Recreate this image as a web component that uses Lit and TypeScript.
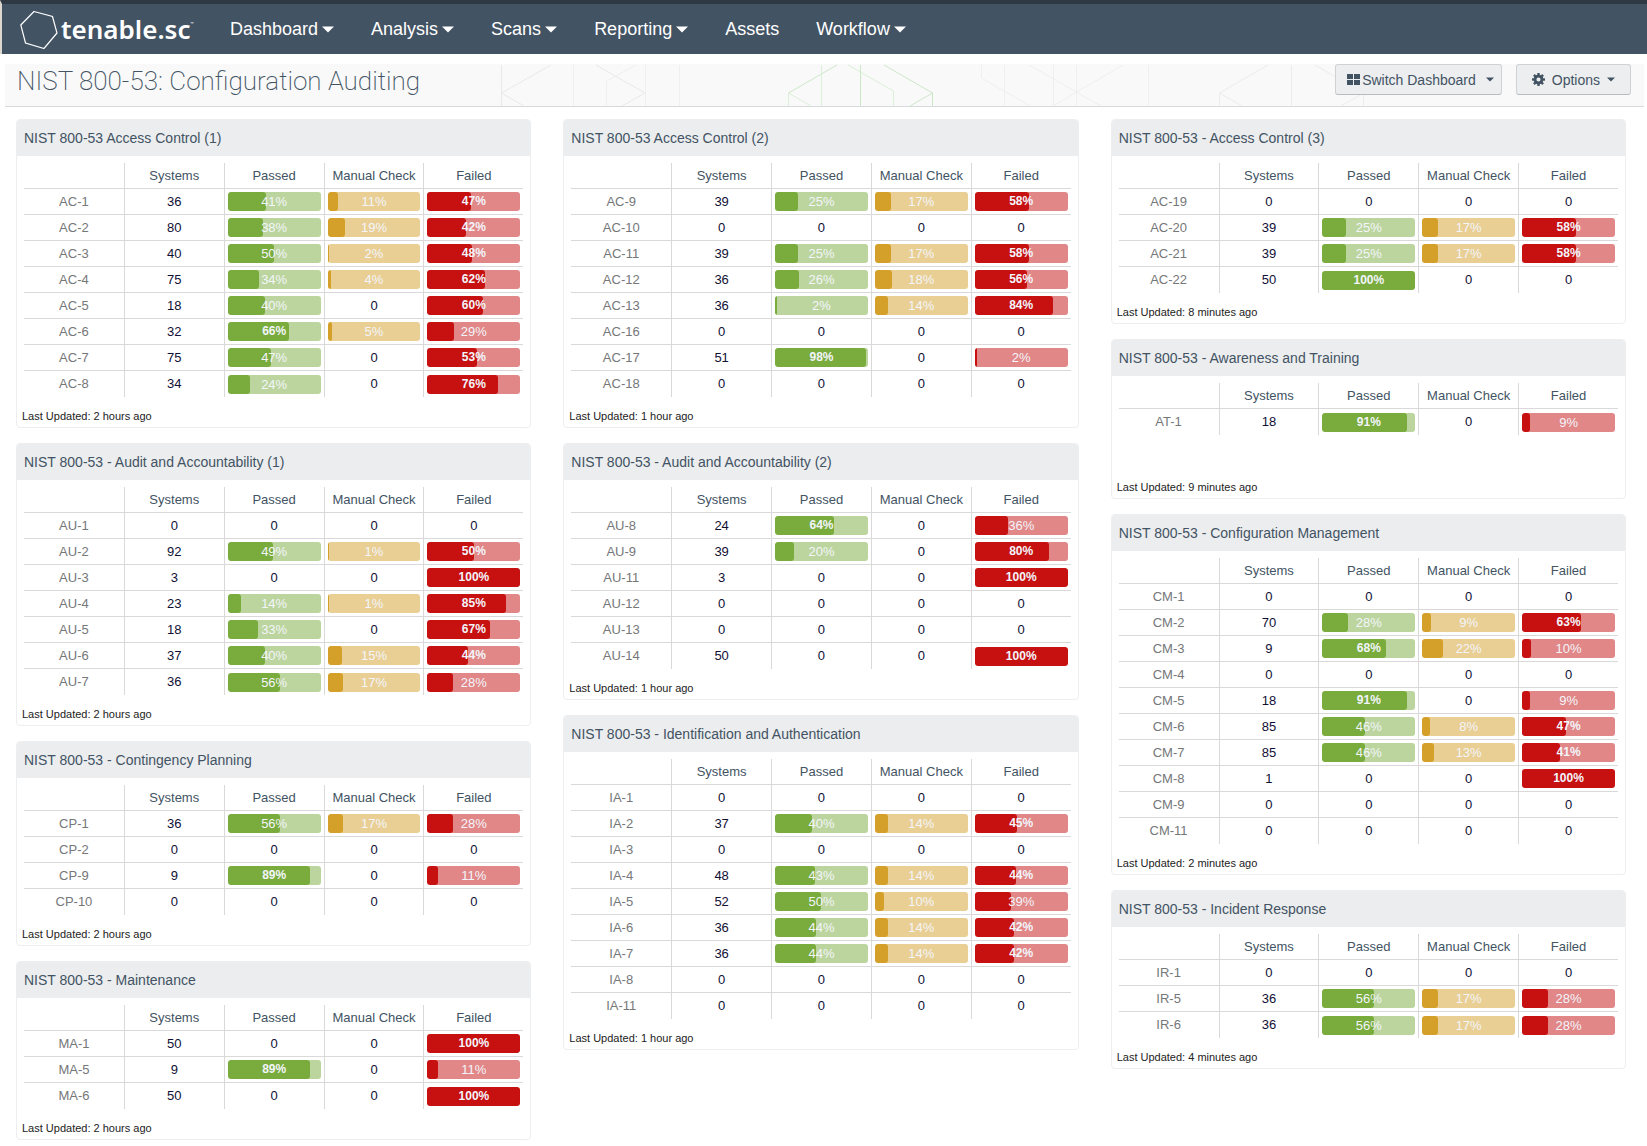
import { LitElement, html, svg, css } from "lit";
import { customElement, property } from "lit/decorators.js";

type Row = [string, number, number, number, number];
interface Panel {
  title: string;
  updated: string;
  rows: Row[];
}

const COLUMNS: Panel[][] = [
  [
    {
      title: "NIST 800-53 Access Control (1)",
      updated: "2 hours ago",
      rows: [
        ["AC-1", 36, 41, 11, 47],
        ["AC-2", 80, 38, 19, 42],
        ["AC-3", 40, 50, 2, 48],
        ["AC-4", 75, 34, 4, 62],
        ["AC-5", 18, 40, 0, 60],
        ["AC-6", 32, 66, 5, 29],
        ["AC-7", 75, 47, 0, 53],
        ["AC-8", 34, 24, 0, 76],
      ],
    },
    {
      title: "NIST 800-53 - Audit and Accountability (1)",
      updated: "2 hours ago",
      rows: [
        ["AU-1", 0, 0, 0, 0],
        ["AU-2", 92, 49, 1, 50],
        ["AU-3", 3, 0, 0, 100],
        ["AU-4", 23, 14, 1, 85],
        ["AU-5", 18, 33, 0, 67],
        ["AU-6", 37, 40, 15, 44],
        ["AU-7", 36, 56, 17, 28],
      ],
    },
    {
      title: "NIST 800-53 - Contingency Planning",
      updated: "2 hours ago",
      rows: [
        ["CP-1", 36, 56, 17, 28],
        ["CP-2", 0, 0, 0, 0],
        ["CP-9", 9, 89, 0, 11],
        ["CP-10", 0, 0, 0, 0],
      ],
    },
    {
      title: "NIST 800-53 - Maintenance",
      updated: "2 hours ago",
      rows: [
        ["MA-1", 50, 0, 0, 100],
        ["MA-5", 9, 89, 0, 11],
        ["MA-6", 50, 0, 0, 100],
      ],
    },
  ],
  [
    {
      title: "NIST 800-53 Access Control (2)",
      updated: "1 hour ago",
      rows: [
        ["AC-9", 39, 25, 17, 58],
        ["AC-10", 0, 0, 0, 0],
        ["AC-11", 39, 25, 17, 58],
        ["AC-12", 36, 26, 18, 56],
        ["AC-13", 36, 2, 14, 84],
        ["AC-16", 0, 0, 0, 0],
        ["AC-17", 51, 98, 0, 2],
        ["AC-18", 0, 0, 0, 0],
      ],
    },
    {
      title: "NIST 800-53 - Audit and Accountability (2)",
      updated: "1 hour ago",
      rows: [
        ["AU-8", 24, 64, 0, 36],
        ["AU-9", 39, 20, 0, 80],
        ["AU-11", 3, 0, 0, 100],
        ["AU-12", 0, 0, 0, 0],
        ["AU-13", 0, 0, 0, 0],
        ["AU-14", 50, 0, 0, 100],
      ],
    },
    {
      title: "NIST 800-53 - Identification and Authentication",
      updated: "1 hour ago",
      rows: [
        ["IA-1", 0, 0, 0, 0],
        ["IA-2", 37, 40, 14, 45],
        ["IA-3", 0, 0, 0, 0],
        ["IA-4", 48, 43, 14, 44],
        ["IA-5", 52, 50, 10, 39],
        ["IA-6", 36, 44, 14, 42],
        ["IA-7", 36, 44, 14, 42],
        ["IA-8", 0, 0, 0, 0],
        ["IA-11", 0, 0, 0, 0],
      ],
    },
  ],
  [
    {
      title: "NIST 800-53 - Access Control (3)",
      updated: "8 minutes ago",
      rows: [
        ["AC-19", 0, 0, 0, 0],
        ["AC-20", 39, 25, 17, 58],
        ["AC-21", 39, 25, 17, 58],
        ["AC-22", 50, 100, 0, 0],
      ],
    },
    {
      title: "NIST 800-53 - Awareness and Training",
      updated: "9 minutes ago",
      rows: [["AT-1", 18, 91, 0, 9]],
    },
    {
      title: "NIST 800-53 - Configuration Management",
      updated: "2 minutes ago",
      rows: [
        ["CM-1", 0, 0, 0, 0],
        ["CM-2", 70, 28, 9, 63],
        ["CM-3", 9, 68, 22, 10],
        ["CM-4", 0, 0, 0, 0],
        ["CM-5", 18, 91, 0, 9],
        ["CM-6", 85, 46, 8, 47],
        ["CM-7", 85, 46, 13, 41],
        ["CM-8", 1, 0, 0, 100],
        ["CM-9", 0, 0, 0, 0],
        ["CM-11", 0, 0, 0, 0],
      ],
    },
    {
      title: "NIST 800-53 - Incident Response",
      updated: "4 minutes ago",
      rows: [
        ["IR-1", 0, 0, 0, 0],
        ["IR-5", 36, 56, 17, 28],
        ["IR-6", 36, 56, 17, 28],
      ],
    },
  ],
];

@customElement("matrix-panel")
export class MatrixPanel extends LitElement {
  @property({ attribute: false }) panel!: Panel;

  static styles = css`
    :host {
      display: block;
    }
    .card {
      box-sizing: border-box;
      display: flex;
      flex-direction: column;
      min-height: 160px;
      border: 1px solid #edeeef;
      border-radius: 4px;
      background: #fff;
      overflow: hidden;
    }
    .title {
      margin: 0;
      padding: 0 7px;
      background: #ecedef;
      color: #425363;
      font-size: 14px;
      font-weight: 400;
      line-height: 36px;
    }
    .body {
      flex: 1;
      padding: 7px 7px 0;
    }
    table {
      width: 100%;
      table-layout: fixed;
      border-collapse: separate;
      border-spacing: 0;
    }
    th,
    td {
      box-sizing: border-box;
      height: 26px;
      padding: 0;
      border-left: 1px solid #d9d9d9;
      border-bottom: 1px solid #d9d9d9;
      text-align: center;
      font-size: 13px;
      font-weight: 400;
      line-height: 18px;
      color: #101035;
    }
    thead th {
      color: #425363;
      white-space: nowrap;
    }
    tbody th {
      color: #757779;
    }
    tr > :first-child {
      border-left: 0;
    }
    tbody tr:last-child > * {
      border-bottom: 0;
    }
    td.filled {
      padding: 0 3px;
    }
    .bar {
      display: grid;
      height: 19px;
      border-radius: 3px;
      overflow: hidden;
      color: #f3f5fb;
      line-height: 19px;
    }
    .bar > * {
      grid-area: 1 / 1;
    }
    .fill {
      border-radius: 3px;
    }
    .passed {
      background: #bcd59e;
    }
    .passed .fill {
      background: #79ac3d;
    }
    .manual {
      background: #e9cf94;
    }
    .manual .fill {
      background: #d5a029;
    }
    .failed {
      background: #e18787;
    }
    .failed .fill {
      background: #c71010;
    }
    .strong {
      font-weight: 700;
      font-size: 12px;
    }
    .updated {
      margin: 0;
      padding: 12px 5px 3px;
      color: #222;
      font-size: 11px;
      line-height: 15px;
    }
  `;

  private cell(value: number, kind: string) {
    if (value === 0) return html`<td>0</td>`;
    const strong = value >= 60 || (kind === "failed" && value > 40);
    return html`<td class="filled">
      <div class="bar ${kind}">
        <div class="fill" style="width:${value}%"></div>
        <span class=${strong ? "strong" : ""}>${value}%</span>
      </div>
    </td>`;
  }

  render() {
    const p = this.panel;
    return html`<section class="card">
      <h2 class="title">${p.title}</h2>
      <div class="body">
        <table>
          <thead>
            <tr>
              <th></th>
              <th scope="col">Systems</th>
              <th scope="col">Passed</th>
              <th scope="col">Manual Check</th>
              <th scope="col">Failed</th>
            </tr>
          </thead>
          <tbody>
            ${p.rows.map(
              ([id, systems, passed, manual, failed]) => html`<tr>
                <th scope="row">${id}</th>
                <td>${systems}</td>
                ${this.cell(passed, "passed")} ${this.cell(manual, "manual")}
                ${this.cell(failed, "failed")}
              </tr>`
            )}
          </tbody>
        </table>
      </div>
      <p class="updated">Last Updated: ${p.updated}</p>
    </section>`;
  }
}

const caret = (cls: string) =>
  html`<svg class=${cls} viewBox="0 0 12 7" aria-hidden="true"><path d="M0 .5h12L6 6.5z" fill="currentColor" /></svg>`;

const gearTeeth = [0, 45, 90, 135, 180, 225, 270, 315];

@customElement("app-root")
export class AppRoot extends LitElement {
  static styles = css`
    :host {
      display: block;
      min-height: 100vh;
      background: #fff;
      font-family: "Liberation Sans", Arial, sans-serif;
    }
    button {
      font-family: inherit;
      cursor: pointer;
    }
    .topbar {
      display: flex;
      align-items: center;
      box-sizing: border-box;
      height: 54px;
      padding: 0 18px;
      border-top: 4px solid #2e3943;
      border-left: 2px solid #dcd8d0;
      background: #425363;
      color: #fff;
    }
    .brand {
      display: flex;
      align-items: center;
      gap: 3px;
      width: 210px;
      color: #fff;
      text-decoration: none;
    }
    .mark {
      width: 38px;
      height: 40px;
    }
    .wordmark {
      padding-bottom: 6px;
      font-family: "Noto Sans", sans-serif;
      font-size: 26px;
      font-weight: 600;
      line-height: 36px;
    }
    .tm {
      font-size: 4px;
      vertical-align: 14px;
    }
    .menu {
      display: flex;
      gap: 37px;
    }
    .menu a {
      display: flex;
      align-items: center;
      gap: 4px;
      color: #fff;
      font-size: 18px;
      line-height: 24px;
      text-decoration: none;
    }
    .caret {
      width: 12px;
      height: 7px;
    }
    .pagehead {
      display: grid;
      box-sizing: border-box;
      height: 43px;
      margin: 10px 3px 0 5px;
      border-bottom: 1px solid #d8d9da;
      background: #f9f9f9;
    }
    .pagehead > * {
      grid-area: 1 / 1;
      min-width: 0;
    }
    .hexes {
      width: 100%;
      height: 42px;
    }
    .headrow {
      display: flex;
      justify-content: space-between;
      align-items: flex-start;
      padding: 0 13px 0 12px;
    }
    h1 {
      margin: 0;
      color: #425363;
      font-family: Roboto, "Liberation Sans", sans-serif;
      font-size: 26px;
      font-weight: 200;
      line-height: 34px;
    }
    .actions {
      display: flex;
      gap: 14px;
    }
    .actions button {
      display: flex;
      align-items: center;
      box-sizing: border-box;
      height: 31px;
      padding: 0 15px;
      border: 1px solid #cfd1d3;
      border-bottom-color: #b9bbbd;
      border-radius: 3px;
      background: #edeef0;
      color: #425363;
      font-size: 14px;
      line-height: 20px;
    }
    .actions .switch {
      gap: 2px;
      padding: 0 7px 0 11px;
    }
    .actions .options {
      gap: 7px;
    }
    .icon {
      width: 13px;
      height: 13px;
    }
    .small {
      width: 8px;
      height: 5px;
    }
    .switch .small {
      margin-left: 8px;
    }
    .board {
      display: grid;
      grid-template-columns: repeat(3, minmax(0, 1fr));
      align-items: start;
      gap: 32px;
      padding: 12px 21px 8px 16px;
    }
    .column {
      display: grid;
      gap: 15px;
    }
  `;

  render() {
    const items: [string, boolean][] = [
      ["Dashboard", true],
      ["Analysis", true],
      ["Scans", true],
      ["Reporting", true],
      ["Assets", false],
      ["Workflow", true],
    ];
    return html`
      <header class="topbar">
        <a class="brand" href="#" aria-label="tenable.sc">
          <svg class="mark" viewBox="0 0 38 40" aria-hidden="true">
            <path d="M14 2.5L32.5 7.5L37 24L24 39.500L5.500 34L.8 16z" fill="none" stroke="#fff" stroke-width="1.2" />
          </svg>
          <span class="wordmark">tenable.sc<span class="tm">™</span></span>
        </a>
        <nav class="menu">
          ${items.map(
            ([label, drop]) => html`<a href="#">${label}${drop ? caret("caret") : ""}</a>`
          )}
        </nav>
      </header>
      <div class="pagehead">
        <svg class="hexes" viewBox="5 0 1639 42" preserveAspectRatio="xMidYMid slice" aria-hidden="true">
          <g fill="none" stroke="#e8e9ea">
            <path d="M501.500 1V42M551 1L501.500 29L524 42M596 1L645 29L622 42" />
            <path d="M573.500 1V42M645.500 1V42M679.500 1V42M606.500 42V17L636 1" stroke="#efeff0" />
            <path d="M981.500 1V14L1030 42M1004.500 1V42M1053.500 1V42M1076.500 1V42M1148.500 1V42M1029 1L1101 42M1123 1L1053 42" stroke="#efeff0" />
            <path d="M1219.500 42V29L1268 1M1219.500 29L1242 42M1291.500 1V42M1363.500 42V29L1315 1M1363.500 29L1341 42" stroke="#ececed" />
          </g>
          <g fill="none" stroke="#cde8c9">
            <path d="M837 1L788.500 29M884 1L932.500 29V42M932.500 29L910 42" />
            <path d="M788.500 42V29L811 42M821.500 1V42M848 1L893.500 27V42" stroke="#dcefd9" />
            <path d="M860.500 1V42" />
          </g>
        </svg>
        <div class="headrow">
          <h1>NIST 800-53: Configuration Auditing</h1>
          <div class="actions">
            <button class="switch" type="button">
              <svg class="icon" viewBox="0 0 13 13" aria-hidden="true">
                <path d="M0 1h6v5H0zM7 1h6v5H7zM0 7h6v5H0zM7 7h6v5H7z" fill="currentColor" />
              </svg>
              <span>Switch Dashboard</span>${caret("small")}
            </button>
            <button class="options" type="button">
              <svg class="icon" viewBox="0 0 12 12" aria-hidden="true">
                <circle cx="6" cy="6" r="3.2" fill="none" stroke="currentColor" stroke-width="2.6" />
                ${gearTeeth.map(
                  (a) => svg`<rect x="4.9" y="0" width="2.2" height="2.5" fill="currentColor" transform="rotate(${a} 6 6)" />`
                )}
              </svg>
              <span>Options</span>${caret("small")}
            </button>
          </div>
        </div>
      </div>
      <main class="board">
        ${COLUMNS.map(
          (col) => html`<div class="column">
            ${col.map((p) => html`<matrix-panel .panel=${p}></matrix-panel>`)}
          </div>`
        )}
      </main>
    `;
  }
}
